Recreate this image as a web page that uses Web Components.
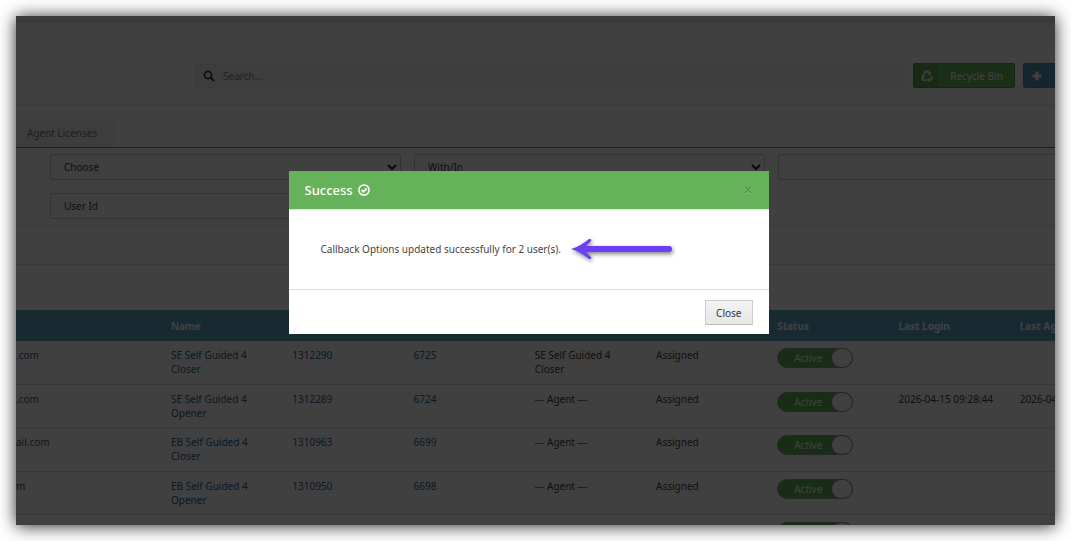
<!DOCTYPE html>
<html lang="en">
<head>
<meta charset="utf-8">
<title>Users</title>
<style>
  body { margin: 0; background: #fff; font: 10px/14px "Noto Sans", "Open Sans", sans-serif; color: #444; }
</style>
</head>
<body>
<app-frame>
  <page-bar></page-bar>
  <search-bar></search-bar>
  <tab-strip></tab-strip>
  <filter-panel></filter-panel>
  <user-table></user-table>
  <success-dialog slot="overlay" heading="Success">
    Callback Options updated successfully for 2 user(s).
    <pointer-arrow slot="pointer"></pointer-arrow>
  </success-dialog>
</app-frame>

<script>
const define = (name, html, setup) => {
  const template = document.createElement('template');
  template.innerHTML = '<style>*, :host { box-sizing: border-box; }</style>' + html;
  customElements.define(name, class extends HTMLElement {
    constructor() {
      super();
      this.attachShadow({ mode: 'open' }).append(template.content.cloneNode(true));
    }
    connectedCallback() { if (setup) setup(this, this.shadowRoot); }
  });
};

define('app-frame', `
  <style>
    :host { display: block; position: relative; margin: 16px; height: calc(100vh - 32px); overflow: hidden;
            background: #fdfdfd; box-shadow: 0 1px 16px rgba(0,0,0,.85); }
    .overlay { position: absolute; inset: 0; background: rgba(0,0,0,.75); padding: 155px 14px 0 0; }
  </style>
  <slot></slot>
  <div class="overlay"><slot name="overlay"></slot></div>`);

define('page-bar', `
  <style>
    :host { display: block; height: 31px; padding-top: 5px; background: #f0f0f0; border-bottom: 1px solid #e8e8e8; }
    div { height: 25px; background: #fbfbfb; border-top: 1px solid #e0e0e0; }
  </style>
  <div></div>`);

define('search-bar', `
  <style>
    :host { display: flex; height: 58px; padding: 16px 0 0 178px; border-bottom: 1px solid #ebebeb; }
    label { flex: 1; display: flex; align-items: center; gap: 6px; height: 25px; padding-left: 9px; margin-right: 9px;
            background: #f1f1f1; border-radius: 3px; }
    svg { display: block; flex: none; }
    input { flex: 1; min-width: 0; border: 0; background: none; font: inherit; padding: 0 2px; color: #444; }
    input::placeholder { color: #888; opacity: 1; }
    .buttons { flex: none; display: flex; gap: 8px; width: 142px; }
  </style>
  <label aria-label="Search">
    <svg width="12" height="12" viewBox="0 0 12 12" fill="none" stroke="#333"><circle cx="5" cy="5" r="3.6" stroke-width="1.6"/><path d="M7.8 7.8 10.6 10.6" stroke-width="2" stroke-linecap="round"/></svg>
    <input type="search" placeholder="Search...">
  </label>
  <div class="buttons">
    <icon-button tone="green">
      <svg slot="icon" width="12" height="12" viewBox="0 0 24 24" fill="none" stroke="#fff" stroke-width="3.6">
        <path d="M6 8 8.600 3H14.400L17 7.600M19.400 12.400 21.600 16.600 19.400 20.200H14.600M9.600 20.200H4.600L2.400 16.600 4.600 12.600"/>
        <path d="M12.600 9.400H19.800V3ZM15.400 15.400V24.400L10.800 20ZM.6 13.200 5.200 8.400 9 14Z" fill="#fff" stroke="none"/>
      </svg>Recycle Bin</icon-button>
    <icon-button tone="blue" label="Add">
      <svg slot="icon" width="10" height="10" viewBox="0 0 10 10"><path d="M3.6 .6h2.8v3h3v2.8h-3v3H3.6v-3h-3V3.6h3z" fill="#fff"/></svg></icon-button>
  </div>`);

define('icon-button', `
  <style>
    :host { display: block; flex: none; --base: #6cb85c; --dark: #60a850; --edge: #4c9a3c; }
    :host([tone="blue"]) { --base: #5a9cc0; --dark: #5294b8; --edge: #4a8cb0; }
    button { display: flex; align-items: stretch; height: 25px; padding: 0; border: 1px solid var(--edge); border-radius: 2px;
             background: var(--base); color: #fff; font: inherit; white-space: nowrap; overflow: hidden; }
    .icon { width: 25px; display: flex; align-items: center; justify-content: center; background: var(--dark); }
    .text { display: flex; align-items: center; justify-content: center; width: 75px; }
  </style>
  <button type="button"><span class="icon"><slot name="icon"></slot></span><span class="text"><slot></slot></span></button>`,
  (host, root) => {
    if (host.hasAttribute('label')) root.querySelector('button').setAttribute('aria-label', host.getAttribute('label'));
  });

define('tab-strip', `
  <style>
    :host { display: flex; height: 43px; padding-top: 15px; border-bottom: 1px solid #3f8aa8; }
    a { display: flex; align-items: center; padding: 0 18px 2px 11px; background: #f1f1f1; color: #777; text-decoration: none; }
  </style>
  <a href="#licenses">Agent Licenses</a>`);

define('filter-panel', `
  <style>
    :host { display: block; }
    .fields { display: grid; grid-template-columns: repeat(3, 1fr); gap: 13px;
              padding: 6px 0 6px 34px; width: calc(100% + 74px); }
    .picker { position: relative; display: block; }
    select, input { display: block; width: 100%; height: 26px; border: 1px solid #ccc; border-radius: 2px; background: #fdfdfd;
              font: inherit; color: #444; padding: 0 13px; appearance: none; }
    .picker svg { position: absolute; right: 4px; top: 9px; }
    .band { height: 40px; border-top: 1px solid #e2e2e2; border-bottom: 1px solid #e2e2e2; }
  </style>
  <div class="fields">
    <label class="picker"><select aria-label="Filter"><option>Choose</option></select>
      <svg width="10" height="8" viewBox="0 0 10 8"><path d="M1 2 5 6 9 2" fill="none" stroke="#222" stroke-width="2"/></svg></label>
    <label class="picker"><select aria-label="Range"><option>With/In</option></select>
      <svg width="10" height="8" viewBox="0 0 10 8"><path d="M1 2 5 6 9 2" fill="none" stroke="#222" stroke-width="2"/></svg></label>
    <input aria-label="Filter value">
    <input aria-label="User Id" value="User Id">
  </div>
  <div class="band"></div>`);

define('status-toggle', `
  <style>
    :host { display: block; }
    label { position: relative; display: flex; align-items: center; width: 76px; height: 20px; border: 1px solid #999;
            border-radius: 10px; background: #66b25a; color: #fff; }
    input { appearance: none; position: absolute; inset: 0; margin: 0; }
    .text { width: 60px; text-align: center; }
    .knob { position: absolute; right: 0; top: 0; width: 20px; height: 18px; border-radius: 10px; background: #fdfdfd; box-shadow: 0 0 0 1px #999; }
  </style>
  <label><input type="checkbox" checked><span class="text">Active</span><span class="knob"></span></label>`);

define('user-table', `
  <style>
    :host { display: block; margin-top: 45px; }
    table { table-layout: fixed; width: calc(100% + 78px); border-collapse: separate; border-spacing: 0; }
    col:first-child { width: 147px; }
    th, td { padding: 0 8px; text-align: left; vertical-align: top; font-weight: 400; }
    th { height: 31px; vertical-align: middle; background: #5ca8c8; color: #fff; font-weight: 700; white-space: nowrap; }
    td { height: 43px; padding: 7px 8px; border-bottom: 1px solid #ddd; }
    tr:nth-child(odd) td { height: 44px; }
    td:first-child { padding-left: 0; }
    a { color: #2a6496; text-decoration: none; }
    td.time { white-space: nowrap; }
    td.state { padding: 7px 8px 0; }
  </style>
  <table>
    <colgroup><col><col><col><col><col><col><col><col><col></colgroup>
    <thead><tr><th></th><th>Name</th><th></th><th></th><th></th><th></th><th>Status</th><th>Last Login</th><th>Last Agent</th></tr></thead>
    <tbody></tbody>
  </table>`, (host, root) => {
  const rows = [
    ['.com', 'SE Self Guided 4 Closer', '1312290', '6725', 'SE Self Guided 4 Closer', 'Assigned', '', ''],
    ['.com', 'SE Self Guided 4 Opener', '1312289', '6724', '--- Agent ---', 'Assigned', '2026-04-15 09:28:44', '2026-04-15'],
    ['ail.com', 'EB Self Guided 4 Closer', '1310963', '6699', '--- Agent ---', 'Assigned', '', ''],
    ['m', 'EB Self Guided 4 Opener', '1310950', '6698', '--- Agent ---', 'Assigned', '', ''],
  ];
  const toggle = '<td class="state"><status-toggle></status-toggle></td>';
  const link = text => `<a href="#user">${text}</a>`;
  root.querySelector('tbody').innerHTML = rows.map(r => `<tr>
    <td>${link(r[0])}</td><td>${link(r[1])}</td><td>${link(r[2])}</td><td>${link(r[3])}</td>
    <td>${r[4]}</td><td>${r[5]}</td>${toggle}
    <td class="time">${r[6]}</td><td class="time">${r[7]}</td></tr>`).join('') +
    `<tr><td colspan="6"></td>${toggle}<td></td><td></td></tr>`;
});

define('success-dialog', `
  <style>
    :host { display: block; width: 480px; margin: 0 auto; background: #fff; }
    header { display: flex; align-items: center; height: 39px; padding: 0 16px; background: #66b25a; color: #fff; border-bottom: 1px solid #dde8db; }
    h2 { margin: 0; font-size: 13px; line-height: 20px; font-weight: 500; display: flex; align-items: center; gap: 5px; flex: 1; }
    .dismiss { border: 0; padding: 0; background: none; display: flex; width: 10px; height: 10px; }
    .body { display: flex; align-items: center; gap: 10px; height: 79px; padding: 0 32px 2px; }
    footer { display: flex; justify-content: flex-end; padding: 10px 16px 9px; border-top: 1px solid #ddd; }
    .close { font: inherit; color: #333; height: 25px; padding: 0 10px; border: 1px solid #ccc; border-bottom-color: #bbb; border-radius: 1px;
             background: linear-gradient(#f3f3f3, #e7e7e7); }
  </style>
  <header>
    <h2><span class="title"></span>
      <svg width="12" height="12" viewBox="0 0 12 12" fill="none" stroke="#fff"><circle cx="6" cy="6" r="5.1" stroke-width="1.5"/><path d="M3.6 6 5.4 7.8 8.6 4.5" stroke-width="1.8"/></svg></h2>
    <button class="dismiss" type="button" aria-label="Dismiss"><svg width="10" height="10" viewBox="0 0 10 10" fill="none"><path d="M2 2.8 8 8.8M8 2.8 2 8.8" stroke="#8fca87" stroke-width="1.6"/><path d="M2 2 8 8M8 2 2 8" stroke="#529048" stroke-width="1.4"/></svg></button>
  </header>
  <div class="body"><span><slot></slot></span><slot name="pointer"></slot></div>
  <footer><button class="close" type="button">Close</button></footer>`, (host, root) => {
  root.querySelector('.title').textContent = host.getAttribute('heading');
});

define('pointer-arrow', `
  <style>:host { display: block; } svg { display: block; filter: drop-shadow(1px 2px 2px rgba(0,0,0,.5)); overflow: visible; }</style>
  <svg width="102" height="22" viewBox="0 0 102 22" aria-hidden="true">
    <path d="M0 11C7 9 13 5 18 1Q21 .5 20 3L15 8H98A3 3 0 0 1 98 14H15L20 19Q21 21.500 18 21C13 17 7 13 0 11Z" fill="#6c3ff5"/>
  </svg>`);
</script>
</body>
</html>
